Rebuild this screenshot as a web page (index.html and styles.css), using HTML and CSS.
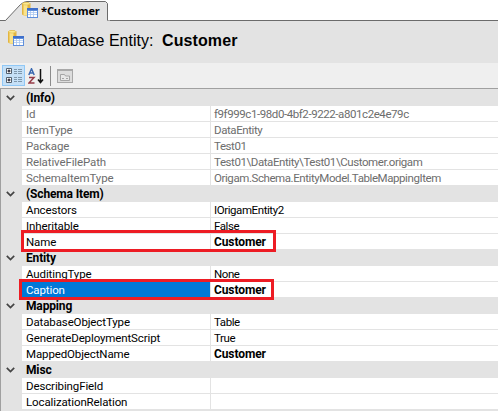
FILE: index.html
```html
<!DOCTYPE html>
<html lang="en">
<head>
<meta charset="utf-8">
<title>Customer</title>
<link rel="stylesheet" href="styles.css">
</head>
<body>
<svg class="defs" width="0" height="0" aria-hidden="true">
  <defs>
    <symbol id="entity" viewBox="0 0 16 16">
      <path d="M0 1.500Q4-.8 8.500 1.500V12.500Q4 15 0 12.500Z" fill="#e3b540"/>
      <path d="M1.500 2.500h4v11h-4z" fill="#fae38a"/>
      <ellipse cx="4.200" cy="1.700" rx="3.700" ry="1.300" fill="#fbe98f" stroke="#d9b040" stroke-width=".5"/>
      <rect x="5" y="6" width="11" height="10" fill="#5f8fdc"/>
      <rect x="5" y="6" width="11" height="2" fill="#3f6fcb"/>
      <path d="M6 9h9v6H6z" fill="#fff"/>
      <path d="M6 10.500h9M6 12.500h9M8.500 9v6M11.500 9v6" stroke="#a9c6f0" stroke-width=".8"/>
    </symbol>
    <symbol id="chevron" viewBox="0 0 9 6"><path d="M.8.8 4.500 4.500 8.200.8" fill="none" stroke="#444" stroke-width="1.700"/></symbol>
  </defs>
</svg>
<header class="tabs">
  <svg class="tab-shape" width="110" height="21" viewBox="0 0 110 21"><path d="M0 20.500H5.500L20.500 4.500Q24 1.500 27 1.500H105.500L107.500 3.500V20.500H110V21H0Z" fill="#e3e3e3"/><path d="M0 20.500H5.500L20.500 4.500Q24 1.500 27 1.500H105.500L107.500 3.500V20.500" fill="none" stroke="#6b6b6b"/></svg>
  <div class="tab"><svg width="16" height="16"><use href="#entity"/></svg><span>*Customer</span></div>
</header>
<div class="title"><svg width="16" height="16"><use href="#entity"/></svg><span class="kind">Database Entity:</span><b>Customer</b></div>
<div class="toolbar">
  <span class="tool active"><svg width="17" height="17" viewBox="0 0 17 17"><path d="M1.500 1.500h5v5h-5zM1.500 10.500h5v5h-5z" fill="#fff" stroke="#53606e"/><path d="M2.500 4h3M4 2.500v3M2.500 13h3M4 11.500v3" stroke="#001"/><path d="M9 2.500h3M13 2.500h4M9 4.500h3M13 4.500h4M9 6.500h3M13 6.500h4M9 10.500h3M13 10.500h4M9 12.500h3M13 12.500h4M9 14.500h3M13 14.500h4" stroke="#7f97ab"/></svg></span>
  <svg class="sort" width="16" height="16" viewBox="0 0 16 16"><path d="M.8 7 3.500.8 6.200 7M1.500 5h4" fill="none" stroke="#3a68b0" stroke-width="1.500"/><path d="M1 9.500h5L1 15h5.500" fill="none" stroke="#963c48" stroke-width="1.500"/><path d="M12.500 1v13M10 11.500 12.500 14.500 15 11.500" fill="none" stroke="#111" stroke-width="1.500"/></svg>
  <i class="sep"></i>
  <svg class="pages" width="16" height="16" viewBox="0 0 16 16"><rect x=".5" y="1.500" width="15" height="13" fill="#ddd" stroke="#a8a8a8"/><path d="M1 2.500h14" stroke="#aaa"/><path d="M3.500 12.500v-6h4l1 1.500h4v4.500zM5 10.500h2M9 10.500h2" fill="#e8e8e8" stroke="#a5a5a5"/></svg>
</div>
<main class="grid">
  <div class="group"><svg width="9" height="6"><use href="#chevron"/></svg><b>(Info)</b></div>
  <div class="row ro"><span>Id</span><span>f9f999c1-98d0-4bf2-9222-a801c2e4e79c</span></div>
  <div class="row ro"><span>ItemType</span><span>DataEntity</span></div>
  <div class="row ro"><span>Package</span><span>Test01</span></div>
  <div class="row ro"><span>RelativeFilePath</span><span>Test01\DataEntity\Test01\Customer.origam</span></div>
  <div class="row ro"><span>SchemaItemType</span><span>Origam.Schema.EntityModel.TableMappingItem</span></div>
  <div class="group"><svg width="9" height="6"><use href="#chevron"/></svg><b>(Schema Item)</b></div>
  <div class="row"><span>Ancestors</span><span>IOrigamEntity2</span></div>
  <div class="row"><span>Inheritable</span><span>False</span></div>
  <div class="row"><span>Name</span><span class="set">Customer</span><i class="mark mark-name"></i></div>
  <div class="group"><svg width="9" height="6"><use href="#chevron"/></svg><b>Entity</b></div>
  <div class="row"><span>AuditingType</span><span>None</span></div>
  <div class="row selected"><span>Caption</span><span class="set">Customer</span><i class="mark mark-caption"></i></div>
  <div class="group"><svg width="9" height="6"><use href="#chevron"/></svg><b>Mapping</b></div>
  <div class="row"><span>DatabaseObjectType</span><span>Table</span></div>
  <div class="row"><span>GenerateDeploymentScript</span><span>True</span></div>
  <div class="row"><span>MappedObjectName</span><span class="set">Customer</span></div>
  <div class="group"><svg width="9" height="6"><use href="#chevron"/></svg><b>Misc</b></div>
  <div class="row"><span>DescribingField</span><span></span></div>
  <div class="row"><span>LocalizationRelation</span><span></span></div>
</main>
</body>
</html>
```
FILE: styles.css
```css
* { box-sizing: border-box; }
body { margin: 0; width: 498px; height: 411px; overflow: hidden; background: #e3e3e3; color: #000; font: 12px/15px Roboto, sans-serif; }
svg { display: block; flex: none; }
.defs { position: absolute; }
.tabs { position: relative; height: 21px; background: #fff; border-bottom: 1px solid #6b6b6b; }
.tab-shape { position: absolute; left: 0; top: 0; }
.tab { position: relative; display: flex; padding: 2px 0 0 22px; gap: 3px; font: bold 11px/17px "Open Sans", sans-serif; letter-spacing: -.1px; }
.title { height: 42px; display: flex; align-items: center; padding: 0 0 4px 8px; font: 16px/24px "Liberation Sans", sans-serif; }
.title svg { margin-top: -4px; }
.title span, .title b { padding-top: 2px; }
.title b { letter-spacing: .1px; }
.kind { margin-left: 12px; width: 126px; white-space: nowrap; }
.toolbar { height: 25px; background: #efefef; display: flex; align-items: center; padding-left: 2px; }
.tool { width: 23px; height: 21px; display: flex; align-items: center; justify-content: center; background: #c5e0f7; border: 1px solid #90c8f6; }
.sort { margin-left: 3px; }
.sep { width: 1px; height: 20px; background: #8c8c8c; margin: 0 6px; }
.grid { height: 323px; border-top: 1px solid #a0a0a0; border-left: 1px solid #a0a0a0; padding-top: 1px; }
.group { height: 16px; display: flex; align-items: center; padding-left: 5px; }
.group b { margin-left: 11px; letter-spacing: -.15px; }
.row { position: relative; display: grid; grid-template-columns: 188px 1fr; height: 16px; margin-left: 21px; background: #fff; border-bottom: 1px solid #e3e3e3; white-space: nowrap; }
.row span { height: 15px; padding-left: 4px; line-height: 17px; font-size: 11.5px; letter-spacing: -.12px; }
.row span + span { border-left: 1px solid #e3e3e3; padding-left: 3px; letter-spacing: -.42px; }
.ro { color: #6d6d6d; }
.row .set.set { font-size: 12px; font-weight: bold; letter-spacing: -.1px; }
.selected span:first-child { background: #0078d7; color: #fff; }
.mark { position: absolute; z-index: 1; border: 3px solid #ed1c24; }
.mark-name { left: -1px; top: -4px; width: 255px; height: 22px; }
.mark-caption { left: -3px; top: -3px; width: 255px; height: 21px; }
```
